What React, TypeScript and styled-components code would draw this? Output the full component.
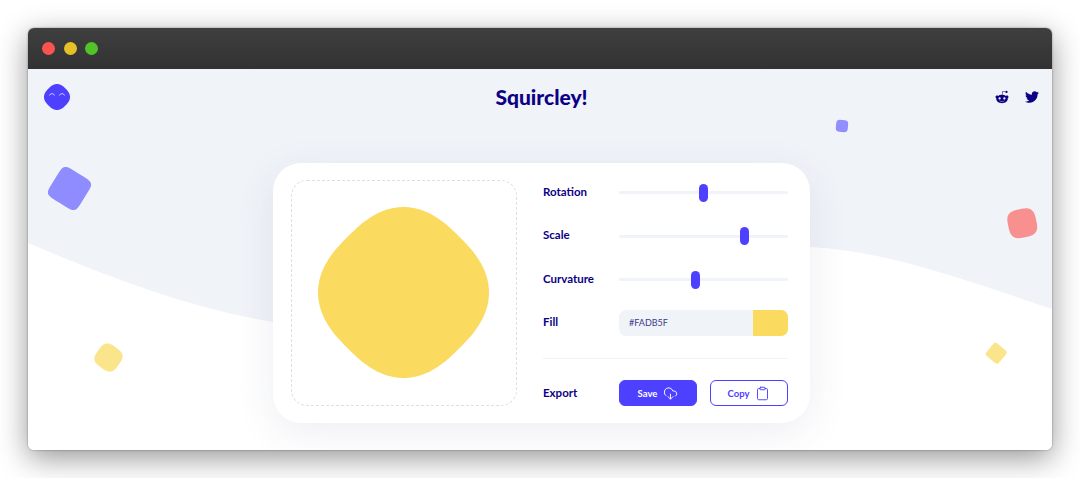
import React from "react";
import styled, { createGlobalStyle } from "styled-components";
import { CloudDownload, Clipboard } from "lucide-react";
import { FaRedditAlien, FaTwitter } from "react-icons/fa";

const NAVY = "#0c0085";
const BLUE = "#4e40ff";
const YELLOW = "#fadb5f";

const GlobalStyle = createGlobalStyle`
  html, body { margin: 0; padding: 0; background: #fff; }
  body { font-family: "Lato", "Noto Sans", sans-serif; }
`;

// superellipse outline, n is the curvature. diamond turns it 45deg and keeps the size as tip to tip
const blob = (size: number, n: number, diamond = false) => {
  const c0 = size / 2;
  const r = diamond ? c0 / (Math.SQRT2 * Math.pow(2, -1 / n)) : c0;
  const k = Math.SQRT1_2;
  const pts: string[] = [];
  for (let i = 0; i < 200; i++) {
    const a = (i / 200) * Math.PI * 2;
    const c = Math.cos(a);
    const s = Math.sin(a);
    const x = r * Math.sign(c) * Math.pow(Math.abs(c), 2 / n);
    const y = r * Math.sign(s) * Math.pow(Math.abs(s), 2 / n);
    const px = diamond ? k * (x - y) : x;
    const py = diamond ? k * (x + y) : y;
    pts.push(`${(c0 + px).toFixed(2)} ${(c0 + py).toFixed(2)}`);
  }
  return `M${pts.join("L")}Z`;
};

const Stage = styled.div`
  padding: 28px;
  width: 1024px;
  height: 422px;
`;

const Win = styled.div`
  width: 1024px;
  height: 422px;
  border-radius: 6px;
  overflow: hidden;
  box-shadow: 0 8px 30px rgba(0, 0, 0, 0.42), 0 0 2px rgba(0, 0, 0, 0.45);
  display: flex;
  flex-direction: column;
`;

const TitleBar = styled.div`
  height: 41px;
  flex: none;
  display: flex;
  align-items: center;
  gap: 8.6px;
  padding-left: 14px;
  background: linear-gradient(#3f3f3f, #323232);
`;

const Light = styled.span<{ $color: string }>`
  width: 13px;
  height: 13px;
  border-radius: 50%;
  background: ${(p) => p.$color};
`;

const Body = styled.div`
  flex: 1;
  position: relative;
  background: #f0f3f8;
  overflow: hidden;
`;

const Wave = styled.svg`
  position: absolute;
  left: 0;
  top: 0;
`;

const Deco = styled.svg<{ $x: number; $y: number; $size: number; $rot: number }>`
  position: absolute;
  left: ${(p) => p.$x}px;
  top: ${(p) => p.$y}px;
  width: ${(p) => p.$size}px;
  height: ${(p) => p.$size}px;
  transform: rotate(${(p) => p.$rot}deg);
  overflow: visible;
`;

const Content = styled.div`
  position: relative;
  display: flex;
  flex-direction: column;
  align-items: center;
`;

const Header = styled.header`
  width: 100%;
  box-sizing: border-box;
  height: 56px;
  padding: 15px 13px 0 16px;
  display: grid;
  grid-template-columns: 1fr auto 1fr;
  align-items: start;
`;

const Title = styled.h1`
  margin: 0;
  font-size: 21px;
  line-height: 26px;
  font-weight: 900;
  color: ${NAVY};
`;

const Socials = styled.div`
  display: flex;
  justify-content: flex-end;
  gap: 16px;
  padding-top: 6px;
  color: ${NAVY};
  font-size: 14px;
`;

const Card = styled.section`
  margin: 38px 0 0 3px;
  width: 537px;
  height: 260px;
  box-sizing: border-box;
  padding: 17px 22px 17px 18px;
  background: #fff;
  border-radius: 28px;
  box-shadow: 0 10px 40px rgba(60, 70, 110, 0.09);
  display: flex;
  gap: 26px;
`;

const Preview = styled.div`
  width: 226px;
  height: 226px;
  box-sizing: border-box;
  flex: none;
  border: 1px dashed #d8e0ea;
  border-radius: 16px;
  display: flex;
  align-items: center;
  justify-content: center;
`;

const Shape = styled.svg`
  margin: -1px 0 0 -1px;
`;

const Controls = styled.div`
  flex: 1;
  margin-top: -1px;
  display: flex;
  flex-direction: column;
`;

const Rows = styled.div`
  display: flex;
  flex-direction: column;
  gap: 17.5px;
`;

const Row = styled.div`
  height: 26px;
  display: grid;
  grid-template-columns: 76px 1fr;
  align-items: center;
`;

const Label = styled.span`
  font-size: 11.5px;
  font-weight: 700;
  color: ${NAVY};
  padding-bottom: 2px;
`;

const Track = styled.div`
  position: relative;
  height: 3px;
  margin-top: 1px;
  border-radius: 2px;
  background: #f0f3f8;
`;

const Thumb = styled.span<{ $at: number }>`
  position: absolute;
  left: ${(p) => p.$at}px;
  top: -7.5px;
  width: 9px;
  height: 18px;
  margin-left: -4.5px;
  border-radius: 5px;
  background: ${BLUE};
`;

const FillField = styled.div`
  height: 26px;
  display: flex;
  border-radius: 7px;
  overflow: hidden;
  background: #f0f3f8;
`;

const HexText = styled.span`
  flex: 1;
  padding-left: 10px;
  font-size: 9px;
  line-height: 26px;
  color: #3a3a8c;
`;

const Swatch = styled.span`
  width: 35px;
  background: ${YELLOW};
`;

const Divider = styled.hr`
  width: 100%;
  margin: 22px 0 21.5px;
  border: 0;
  border-top: 1px solid #f1f3f7;
`;

const Buttons = styled.div`
  display: flex;
  justify-content: space-between;
`;

const Btn = styled.button<{ $solid?: boolean }>`
  width: 78px;
  height: 26px;
  box-sizing: border-box;
  padding: 0;
  display: flex;
  align-items: center;
  justify-content: center;
  gap: 6px;
  border-radius: 6px;
  border: 1px solid ${BLUE};
  font-family: inherit;
  font-size: 9.5px;
  font-weight: 700;
  color: ${(p) => (p.$solid ? "#fff" : BLUE)};
  background: ${(p) => (p.$solid ? BLUE : "#fff")};
`;

const sliders = [
  { name: "Rotation", at: 84.5 },
  { name: "Scale", at: 125.5 },
  { name: "Curvature", at: 76 },
];

const decos = [
  { x: 24, y: 101.5, size: 35, rot: 32, n: 6, color: "#8f8cff" },
  { x: 808, y: 51, size: 12, rot: 5, n: 4, color: "#918eff" },
  { x: 979.5, y: 140, size: 28.5, rot: -12, n: 3.2, color: "#f89090" },
  { x: 68.3, y: 275.8, size: 25, rot: 36, n: 3.2, color: "#fbe58c" },
  { x: 959.5, y: 275.8, size: 16.5, rot: 40, n: 7, color: "#fbe58c" },
];

export default function App() {
  return (
    <>
      <GlobalStyle />
      <Stage>
        <Win>
          <TitleBar>
            <Light $color="#fb5350" />
            <Light $color="#e6c029" />
            <Light $color="#52c22b" />
          </TitleBar>
          <Body>
            <Wave width="1024" height="381" viewBox="0 0 1024 381">
              <path
                fill="#fff"
                d="M0 174C85 210 165 240 245 253C350 270 560 170 782 178C860 182 940 212 1024 240V381H0Z"
              />
            </Wave>
            {decos.map((d, i) => (
              <Deco key={i} $x={d.x} $y={d.y} $size={d.size} $rot={d.rot} viewBox={`0 0 ${d.size} ${d.size}`}>
                <path d={blob(d.size, d.n)} fill={d.color} />
              </Deco>
            ))}
            <Content>
              <Header>
                <svg width="26" height="26" viewBox="0 0 26 26">
                  <path d={blob(26, 2.6, true)} fill={BLUE} />
                  <path
                    d="M5.5 11.5a2.6 2.6 0 0 1 5 0M15.5 11.5a2.6 2.6 0 0 1 5 0"
                    fill="none"
                    stroke="#d6d3ff"
                    strokeWidth="0.9"
                  />
                </svg>
                <Title>Squircley!</Title>
                <Socials>
                  <FaRedditAlien />
                  <FaTwitter />
                </Socials>
              </Header>
              <Card>
                <Preview>
                  <Shape width="171" height="171" viewBox="0 0 171 171">
                    <path d={blob(171, 2.6, true)} fill={YELLOW} />
                  </Shape>
                </Preview>
                <Controls>
                  <Rows>
                    {sliders.map((s) => (
                      <Row key={s.name}>
                        <Label>{s.name}</Label>
                        <Track>
                          <Thumb $at={s.at} />
                        </Track>
                      </Row>
                    ))}
                    <Row>
                      <Label>Fill</Label>
                      <FillField>
                        <HexText>#FADB5F</HexText>
                        <Swatch />
                      </FillField>
                    </Row>
                  </Rows>
                  <Divider />
                  <Row>
                    <Label>Export</Label>
                    <Buttons>
                      <Btn $solid>
                        Save <CloudDownload size={15} strokeWidth={1.5} />
                      </Btn>
                      <Btn>
                        Copy <Clipboard size={15} strokeWidth={1.5} />
                      </Btn>
                    </Buttons>
                  </Row>
                </Controls>
              </Card>
            </Content>
          </Body>
        </Win>
      </Stage>
    </>
  );
}
